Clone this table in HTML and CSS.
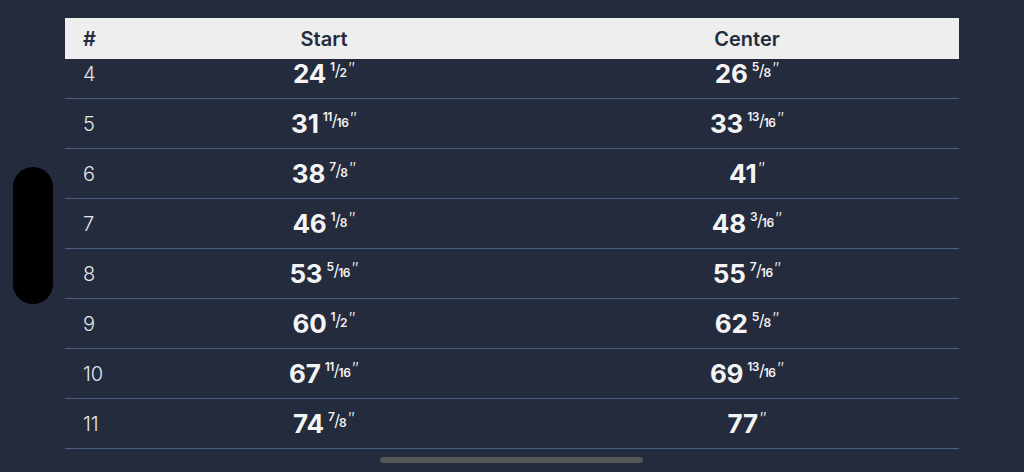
FILE: index.html
```html
<!DOCTYPE html>
<html lang="en">
  <head>
    <meta charset="UTF-8" />
    <title>Spacing table</title>
    <link rel="stylesheet" href="styles.css" />
  </head>
  <body>
    <div class="notch"></div>

    <main class="screen">
      <div class="table">
        <div class="thead">
          <div class="col-idx">#</div>
          <div class="col-val">Start</div>
          <div class="col-val">Center</div>
        </div>

        <div class="tbody">
          <div class="row first">
            <div class="col-idx">4</div>
            <div class="col-val"><span class="whole">24</span><span class="frac"><span class="nu">1</span><span class="sl">/</span><span class="de">2</span></span><span class="in">″</span></div>
            <div class="col-val"><span class="whole">26</span><span class="frac"><span class="nu">5</span><span class="sl">/</span><span class="de">8</span></span><span class="in">″</span></div>
          </div>
          <div class="row">
            <div class="col-idx">5</div>
            <div class="col-val"><span class="whole">31</span><span class="frac"><span class="nu">11</span><span class="sl">/</span><span class="de">16</span></span><span class="in">″</span></div>
            <div class="col-val"><span class="whole">33</span><span class="frac"><span class="nu">13</span><span class="sl">/</span><span class="de">16</span></span><span class="in">″</span></div>
          </div>
          <div class="row">
            <div class="col-idx">6</div>
            <div class="col-val"><span class="whole">38</span><span class="frac"><span class="nu">7</span><span class="sl">/</span><span class="de">8</span></span><span class="in">″</span></div>
            <div class="col-val"><span class="whole">41</span><span class="in">″</span></div>
          </div>
          <div class="row">
            <div class="col-idx">7</div>
            <div class="col-val"><span class="whole">46</span><span class="frac"><span class="nu">1</span><span class="sl">/</span><span class="de">8</span></span><span class="in">″</span></div>
            <div class="col-val"><span class="whole">48</span><span class="frac"><span class="nu">3</span><span class="sl">/</span><span class="de">16</span></span><span class="in">″</span></div>
          </div>
          <div class="row">
            <div class="col-idx">8</div>
            <div class="col-val"><span class="whole">53</span><span class="frac"><span class="nu">5</span><span class="sl">/</span><span class="de">16</span></span><span class="in">″</span></div>
            <div class="col-val"><span class="whole">55</span><span class="frac"><span class="nu">7</span><span class="sl">/</span><span class="de">16</span></span><span class="in">″</span></div>
          </div>
          <div class="row">
            <div class="col-idx">9</div>
            <div class="col-val"><span class="whole">60</span><span class="frac"><span class="nu">1</span><span class="sl">/</span><span class="de">2</span></span><span class="in">″</span></div>
            <div class="col-val"><span class="whole">62</span><span class="frac"><span class="nu">5</span><span class="sl">/</span><span class="de">8</span></span><span class="in">″</span></div>
          </div>
          <div class="row">
            <div class="col-idx">10</div>
            <div class="col-val"><span class="whole">67</span><span class="frac"><span class="nu">11</span><span class="sl">/</span><span class="de">16</span></span><span class="in">″</span></div>
            <div class="col-val"><span class="whole">69</span><span class="frac"><span class="nu">13</span><span class="sl">/</span><span class="de">16</span></span><span class="in">″</span></div>
          </div>
          <div class="row">
            <div class="col-idx">11</div>
            <div class="col-val"><span class="whole">74</span><span class="frac"><span class="nu">7</span><span class="sl">/</span><span class="de">8</span></span><span class="in">″</span></div>
            <div class="col-val"><span class="whole">77</span><span class="in">″</span></div>
          </div>
        </div>
      </div>
    </main>

    <div class="home-bar"></div>
  </body>
</html>
```

FILE: styles.css
```css
/* Couleurs */
:root {
  --bg: #232b3c;
  --head-bg: #eeeeee;
  --head-text: #232b3c;
  --line: #4a5f7e;
  --text: #f4f4f4;
  --text-soft: #e4e6ea;
}

html,
body {
  margin: 0;
  padding: 0;
  height: 100%;
}

body {
  background: var(--bg);
  font-family: Inter, "Noto Sans", "DejaVu Sans", sans-serif;
  color: var(--text);
  overflow: hidden;
}

.screen {
  padding: 18px 0 0 65px;
}

.table {
  width: 894px;
  height: 431px;
  overflow: hidden;
}

/* En-tete */
.thead {
  display: grid;
  grid-template-columns: 48px 422px 424px;
  height: 41px;
  align-items: center;
  background: var(--head-bg);
  color: var(--head-text);
  font-size: 20px;
  font-weight: 600;
  position: relative;
  z-index: 1;
}

.col-idx {
  padding-left: 18px;
}

.col-val {
  text-align: center;
}

/* Lignes */
.tbody {
  margin-top: -10px;
}

.row {
  display: grid;
  grid-template-columns: 48px 422px 424px;
  height: 49px;
  align-items: center;
  border-bottom: 1px solid var(--line);
}

.row .col-idx {
  font-size: 20px;
  font-weight: 300;
  color: var(--text-soft);
}

.whole {
  font-size: 26px;
  font-weight: 700;
  letter-spacing: -0.2px;
}

.frac {
  display: inline-block;
  margin-left: 4px;
  font-size: 12px;
  font-weight: 600;
  vertical-align: 7px;
  line-height: 1;
}

.frac .nu {
  position: relative;
  top: -5px;
  letter-spacing: -0.5px;
}

.frac .sl {
  font-size: 16px;
  font-weight: 400;
  margin: 0 -1px 0 0;
}

.frac .de {
  position: relative;
  top: 1px;
  letter-spacing: -0.5px;
}

.in {
  display: inline-block;
  margin-left: 2px;
  font-size: 17px;
  font-weight: 300;
  vertical-align: 8px;
  line-height: 1;
}

/* Decor de l'ecran */
.notch {
  position: absolute;
  left: 13px;
  top: 167px;
  width: 40px;
  height: 137px;
  border-radius: 20px;
  background: #000;
}

.home-bar {
  position: absolute;
  left: 380px;
  top: 457px;
  width: 263px;
  height: 6px;
  border-radius: 3px;
  background: #565656;
}
```
